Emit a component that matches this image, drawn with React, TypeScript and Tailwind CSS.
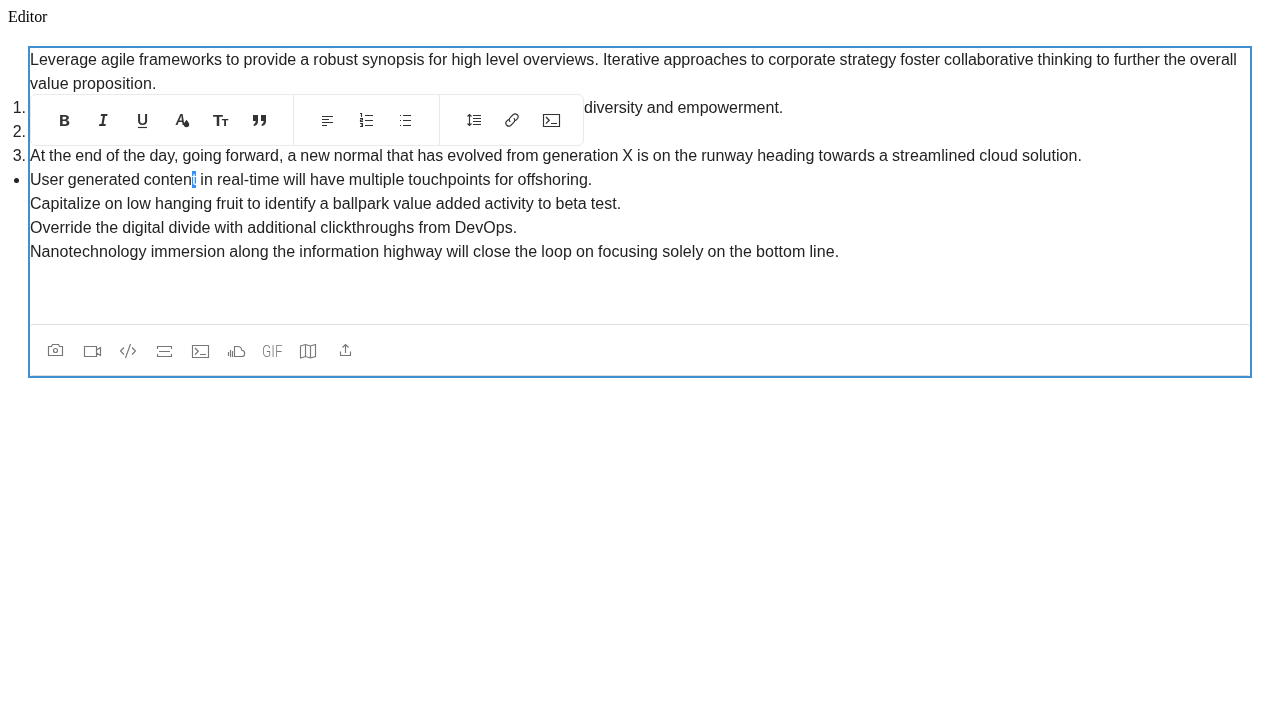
import type { ReactNode } from "react";

function Icon({ children }: { children: ReactNode }) {
  return (
    <svg className="block h-6 w-6 shrink-0 overflow-visible" viewBox="0 0 24 24" fill="none" stroke="currentColor" strokeWidth="1.15">
      {children}
    </svg>
  );
}

function Glyph({ x, y, width, className, children }: { x: number; y: number; width: number; className: string; children: string }) {
  return (
    <text x={x} y={y} textLength={width} lengthAdjust="spacingAndGlyphs" className={className} fill="currentColor" stroke="none">
      {children}
    </text>
  );
}

const terminal = (
  <Icon>
    <path d="M4.5 6.5h16v12h-16zM12 15.5h6" />
    <path d="M7 9l3.2 3.3L7 15.6" strokeWidth="1.3" />
  </Icon>
);

function FloatingToolbar() {
  return (
    <div className="absolute left-0 top-[46px] flex h-[52px] w-[554px] rounded-md border border-[#e9e9e9] bg-white text-[#333] [word-spacing:0]">
      <div className="flex items-center gap-[15px] border-r border-[#e9e9e9] pl-[21px] pr-[22px]">
        <Icon>
          <Glyph x={7} y={18} width={11} className="font-['Inter'] text-[15px] font-bold">B</Glyph>
        </Icon>
        <Icon>
          <Glyph x={7.7} y={18} width={9} className="font-['DejaVu_Sans_Mono'] text-[15px] font-bold italic">I</Glyph>
        </Icon>
        <Icon>
          <Glyph x={6.9} y={17} width={11.2} className="font-['Inter'] text-[14px] font-semibold">U</Glyph>
          <path d="M8 19.5h9" />
        </Icon>
        <Icon>
          <Glyph x={6.8} y={17} width={9.6} className="font-['Inter'] text-[14.5px] font-semibold italic">A</Glyph>
          <path d="M17.5 11.8c.7 1.4 2.7 2.7 2.7 4.8a2.7 2.7 0 0 1-5.4 0c0-2.1 2-3.4 2.7-4.8z" fill="currentColor" stroke="none" />
        </Icon>
        <Icon>
          <Glyph x={4.5} y={18} width={11} className="font-['Inter'] text-[15px] font-bold">T</Glyph>
          <Glyph x={13.5} y={18} width={7.2} className="font-['Inter'] text-[9.5px] font-extrabold">T</Glyph>
        </Icon>
        <Icon>
          <path d="M6 7h5v6c0 3-1.5 4.6-4.3 5v-1.8c1.3-.5 1.9-1.5 2-3.2H6zM14 7h5v6c0 3-1.5 4.6-4.3 5v-1.8c1.3-.5 1.9-1.5 2-3.2H14z" fill="currentColor" stroke="none" />
        </Icon>
      </div>
      <div className="flex items-center gap-[15px] border-r border-[#e9e9e9] pl-[21px] pr-[22px]">
        <Icon>
          <path d="M7 8.5h11M7 11.5h7M7 14.5h11M7 17.5h5" />
        </Icon>
        <Icon>
          <path d="M11 7.5h8M11 12.5h8M11 17.5h8" />
          <path d="M6 5.5h1.5V9M6 10.5h2.5v1.5h-2v1.5H9M6 15.5h2.5v3H6M7 17h1.5" />
        </Icon>
        <Icon>
          <path d="M7 7.5h1M7 12.5h1M7 17.5h1M10 7.5h8M10 12.5h8M10 17.5h8" />
        </Icon>
      </div>
      <div className="flex items-center gap-[15px] pl-[21px]">
        <Icon>
          <path d="M12 7.5h8M12 10.5h8M12 13.5h8M12 16.5h8M8.5 6.5v11" />
          <path d="M6.5 8.5l2-2 2 2M6.5 15.5l2 2 2-2" />
        </Icon>
        <Icon>
          <path d="M10.2 13.8a3 3 0 0 1 0-4.2l3.1-3.1a3 3 0 0 1 4.2 4.2l-2 2M13.8 10.2a3 3 0 0 1 0 4.2l-3.1 3.1a3 3 0 0 1-4.2-4.2l2-2" />
        </Icon>
        {terminal}
      </div>
    </div>
  );
}

function InsertBar() {
  return (
    <div className="flex h-[52px] items-center gap-3 rounded-[3px] border-y border-[#dedede] bg-white pl-[14px] pt-[2px] text-[#777] [word-spacing:0]">
      <Icon>
        <path d="M4.5 7.5h3l1-2h6l1 2h3v9h-14z" />
        <circle cx="11.5" cy="11.5" r="2" />
      </Icon>
      <Icon>
        <path d="M4.5 7.5h12v10h-12zM16.5 11l4-2.5v8l-4-2.5" />
      </Icon>
      <Icon>
        <path d="M8 8.5l-3.5 3.5L8 15.5M16 8.5l3.5 3.5-3.5 3.5M14.5 5l-5 14" />
      </Icon>
      <Icon>
        <path d="M5.5 10V7.5h14V10M7 12.5h11M5.5 15v2.5h14V15" />
      </Icon>
      {terminal}
      <Icon>
        <path d="M4.5 13v4M6.5 11v7M8.5 12v6M10.5 17.5v-10h3c2.5 0 4 1.5 4.3 3.8 1.8.2 2.9 1.5 2.9 3.1 0 1.8-1.2 3.1-2.9 3.1z" />
      </Icon>
      <Icon>
        <Glyph x={2} y={18} width={20.5} className="font-['Roboto'] text-[16px] font-light">GIF</Glyph>
      </Icon>
      <Icon>
        <path d="M4.5 7l5-1.5 5 1.5 5-1.5v12l-5 1.5-5-1.5-5 1.5zM9.5 5.5v12M14.5 7v12" />
      </Icon>
      <Icon>
        <path d="M8.5 12.5v4h10v-4M13.5 14V5.5M10.5 8.5l3-3 3 3" />
      </Icon>
    </div>
  );
}

export default function App() {
  return (
    <div className="min-h-screen p-2 will-change-transform">
      <p className="font-['Liberation_Serif',serif] text-[16px] leading-[18px] tracking-[-0.12px] text-black">Editor</p>
      <main className="relative mx-[22px] mt-[22px] font-['Liberation_Sans',sans-serif] text-[16px] leading-6 text-[#222] outline-2 outline-[#3f8fd2] [word-spacing:-0.45px]">
        <div className="h-[276px]">
          <p>
            <span className="tracking-[0.036px]">Leverage agile frameworks to provide a robust synopsis for high level overviews. </span>
            <span className="tracking-[-0.025px]">Iterative approaches to corporate strategy foster collaborative thinking to further the overall </span>
            <span className="tracking-[0.08px]">value proposition.</span>
          </p>
          <ol className="list-outside list-decimal">
            <li>
              <span className="tracking-[0.085px]">Organically grow the holistic world view of disruptive innovation via workplace </span>
              <span>diversity and empowerment.</span>
            </li>
            <li>Bring to the table win-win survival strategies to ensure proactive domination.</li>
            <li>
              <span className="tracking-[-0.013px]">At the end of the day, </span>
              <span className="tracking-[0.01px]">going forward, a new normal that has evolved from generation </span>
              <span className="tracking-[0.055px]">X is on the runway heading towards a streamlined cloud solution.</span>
            </li>
          </ol>
          <ul className="list-outside list-disc">
            <li>
              User generated conten<span className="bg-[#3390ff] text-white">t</span>
              <span className="tracking-[0.04px]"> in real-time will have multiple touchpoints for offshoring.</span>
            </li>
          </ul>
          <p className="tracking-[0.049px]">Capitalize on low hanging fruit to identify a ballpark value added activity to beta test.</p>
          <p className="tracking-[0.05px]">Override the digital divide with additional clickthroughs from DevOps.</p>
          <p className="tracking-[0.07px]">Nanotechnology immersion along the information highway will close the loop on focusing solely on the bottom line.</p>
        </div>
        <InsertBar />
        <FloatingToolbar />
      </main>
    </div>
  );
}
